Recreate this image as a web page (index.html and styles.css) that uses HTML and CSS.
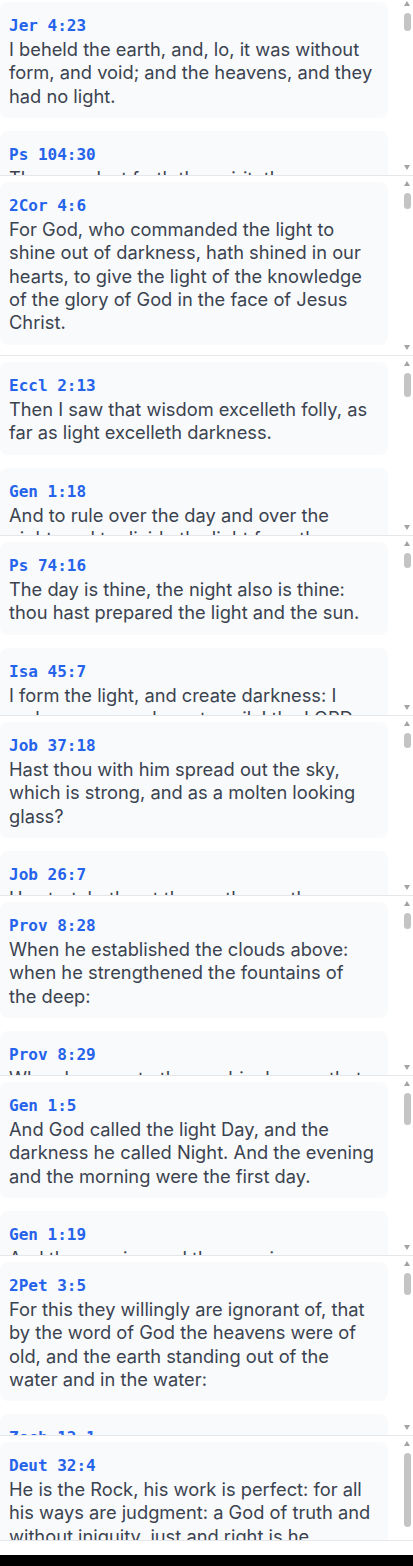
FILE: index.html
```html
<!DOCTYPE html>
<html lang="en">
<head>
<meta charset="utf-8">
<title>Verses</title>
<link rel="stylesheet" href="styles.css">
</head>
<body>
<main class="page">

  <section class="panel panel-first">
    <div class="viewport">
      <article class="card">
        <div class="ref">Jer 4:23</div>
        <p class="verse">I beheld the earth, and, lo, it was without form, and void; and the heavens, and they had no light.</p>
      </article>
      <article class="card">
        <div class="ref">Ps 104:30</div>
        <p class="verse">Thou sendest forth thy spirit, they are created: and thou renewest the face of the earth.</p>
      </article>
    </div>
    <div class="scrollbar"><span class="arrow-up"></span><div class="track"><span class="thumb thumb-18"></span></div><span class="arrow-down"></span></div>
  </section>

  <section class="panel">
    <div class="viewport">
      <article class="card">
        <div class="ref">2Cor 4:6</div>
        <p class="verse">For God, who commanded the light to shine out of darkness, hath shined in our hearts, to give the light of the knowledge of the glory of God in the face of Jesus Christ.</p>
      </article>
      <article class="card">
        <div class="ref">John 1:5</div>
        <p class="verse">And the light shineth in darkness; and the darkness comprehended it not.</p>
      </article>
    </div>
    <div class="scrollbar"><span class="arrow-up"></span><div class="track"><span class="thumb thumb-16"></span></div><span class="arrow-down"></span></div>
  </section>

  <section class="panel">
    <div class="viewport">
      <article class="card">
        <div class="ref">Eccl 2:13</div>
        <p class="verse">Then I saw that wisdom excelleth folly, as far as light excelleth darkness.</p>
      </article>
      <article class="card">
        <div class="ref">Gen 1:18</div>
        <p class="verse">And to rule over the day and over the night, and to divide the light from the darkness: and God saw that it was good.</p>
      </article>
    </div>
    <div class="scrollbar"><span class="arrow-up"></span><div class="track"><span class="thumb thumb-24"></span></div><span class="arrow-down"></span></div>
  </section>

  <section class="panel">
    <div class="viewport">
      <article class="card">
        <div class="ref">Ps 74:16</div>
        <p class="verse">The day is thine, the night also is thine: thou hast prepared the light and the sun.</p>
      </article>
      <article class="card">
        <div class="ref">Isa 45:7</div>
        <p class="verse">I form the light, and create darkness: I make peace, and create evil: I the LORD do all these things.</p>
      </article>
    </div>
    <div class="scrollbar"><span class="arrow-up"></span><div class="track"><span class="thumb thumb-15"></span></div><span class="arrow-down"></span></div>
  </section>

  <section class="panel">
    <div class="viewport">
      <article class="card">
        <div class="ref">Job 37:18</div>
        <p class="verse">Hast thou with him spread out the sky, which is strong, and as a molten looking glass?</p>
      </article>
      <article class="card">
        <div class="ref">Job 26:7</div>
        <p class="verse">He stretcheth out the north over the empty place, and hangeth the earth upon nothing.</p>
      </article>
    </div>
    <div class="scrollbar"><span class="arrow-up"></span><div class="track"><span class="thumb thumb-15"></span></div><span class="arrow-down"></span></div>
  </section>

  <section class="panel">
    <div class="viewport">
      <article class="card">
        <div class="ref">Prov 8:28</div>
        <p class="verse">When he established the clouds above: when he strengthened the fountains of the deep:</p>
      </article>
      <article class="card">
        <div class="ref">Prov 8:29</div>
        <p class="verse">When he gave to the sea his decree, that the waters should not pass his commandment: when he appointed the foundations of the earth:</p>
      </article>
    </div>
    <div class="scrollbar"><span class="arrow-up"></span><div class="track"><span class="thumb thumb-16"></span></div><span class="arrow-down"></span></div>
  </section>

  <section class="panel">
    <div class="viewport">
      <article class="card">
        <div class="ref">Gen 1:5</div>
        <p class="verse">And God called the light Day, and the darkness he called Night. And the evening and the morning were the first day.</p>
      </article>
      <article class="card">
        <div class="ref">Gen 1:19</div>
        <p class="verse">And the evening and the morning were the fourth day.</p>
      </article>
    </div>
    <div class="scrollbar"><span class="arrow-up"></span><div class="track"><span class="thumb thumb-32"></span></div><span class="arrow-down"></span></div>
  </section>

  <section class="panel">
    <div class="viewport">
      <article class="card">
        <div class="ref">2Pet 3:5</div>
        <p class="verse">For this they willingly are ignorant of, that by the word of God the heavens were of old, and the earth standing out of the water and in the water:</p>
      </article>
      <article class="card">
        <div class="ref">Zech 12:1</div>
        <p class="verse">The burden of the word of the LORD for Israel, saith the LORD, which stretcheth forth the heavens, and layeth the foundation of the earth.</p>
      </article>
    </div>
    <div class="scrollbar"><span class="arrow-up"></span><div class="track"><span class="thumb thumb-22"></span></div><span class="arrow-down"></span></div>
  </section>

  <section class="panel panel-short">
    <div class="viewport">
      <article class="card">
        <div class="ref">Deut 32:4</div>
        <p class="verse">He is the Rock, his work is perfect: for all his ways are judgment: a God of truth and without iniquity, just and right is he.</p>
      </article>
    </div>
    <div class="scrollbar"><span class="arrow-up"></span><div class="track"><span class="thumb thumb-74"></span></div></div>
  </section>

</main>
</body>
</html>
```
FILE: styles.css
```css
html {
  background: #000;
}

body {
  margin: 0;
  background: #fff;
  font-family: Inter, "Noto Sans", sans-serif;
}

.page {
  display: flex;
  flex-direction: column;
  padding-bottom: 14px;
  background: #fff;
}

.panel {
  display: flex;
  height: 179px;
  flex: none;
  border-bottom: 1px solid #e5e7eb;
  overflow: hidden;
}

.panel-first {
  margin-top: -4px;
}

.panel-short {
  height: 104px;
}

.viewport {
  flex: 1;
  min-width: 0;
  display: flex;
  flex-direction: column;
  gap: 13px;
  padding: 6px 10px 0 0;
  overflow: hidden;
}

.card {
  flex: none;
  background: #f9fafb;
  border-radius: 8px;
  padding: 12px 13px 10px 9px;
}

.ref {
  font-family: "DejaVu Sans Mono", "Liberation Mono", monospace;
  font-weight: 700;
  font-size: 16px;
  line-height: 24px;
  color: #2563eb;
}

.verse {
  margin: 0;
  font-size: 18.3px;
  line-height: 23.35px;
  color: #3b4350;
}

/* scrollbar */
.scrollbar {
  width: 15px;
  flex: none;
  display: flex;
  flex-direction: column;
}

.arrow-up,
.arrow-down {
  height: 15px;
  flex: none;
  display: flex;
  align-items: center;
  padding-left: 6px;
}

.arrow-up::before,
.arrow-down::before {
  content: "";
  width: 0;
  height: 0;
  border-left: 3.5px solid transparent;
  border-right: 3.5px solid transparent;
}

.arrow-up::before {
  border-bottom: 5px solid #a3a3a3;
}

.arrow-down::before {
  border-top: 5px solid #a3a3a3;
}

.track {
  flex: 1;
  padding: 2px 0 0 6px;
}

.thumb {
  display: block;
  width: 7px;
  border-radius: 4px;
  background: #c4c4c4;
}

.thumb-15 { height: 15px; }
.thumb-16 { height: 16px; }
.thumb-18 { height: 18px; }
.thumb-22 { height: 22px; }
.thumb-24 { height: 24px; }
.thumb-32 { height: 32px; }
.thumb-74 { height: 74px; }
```
